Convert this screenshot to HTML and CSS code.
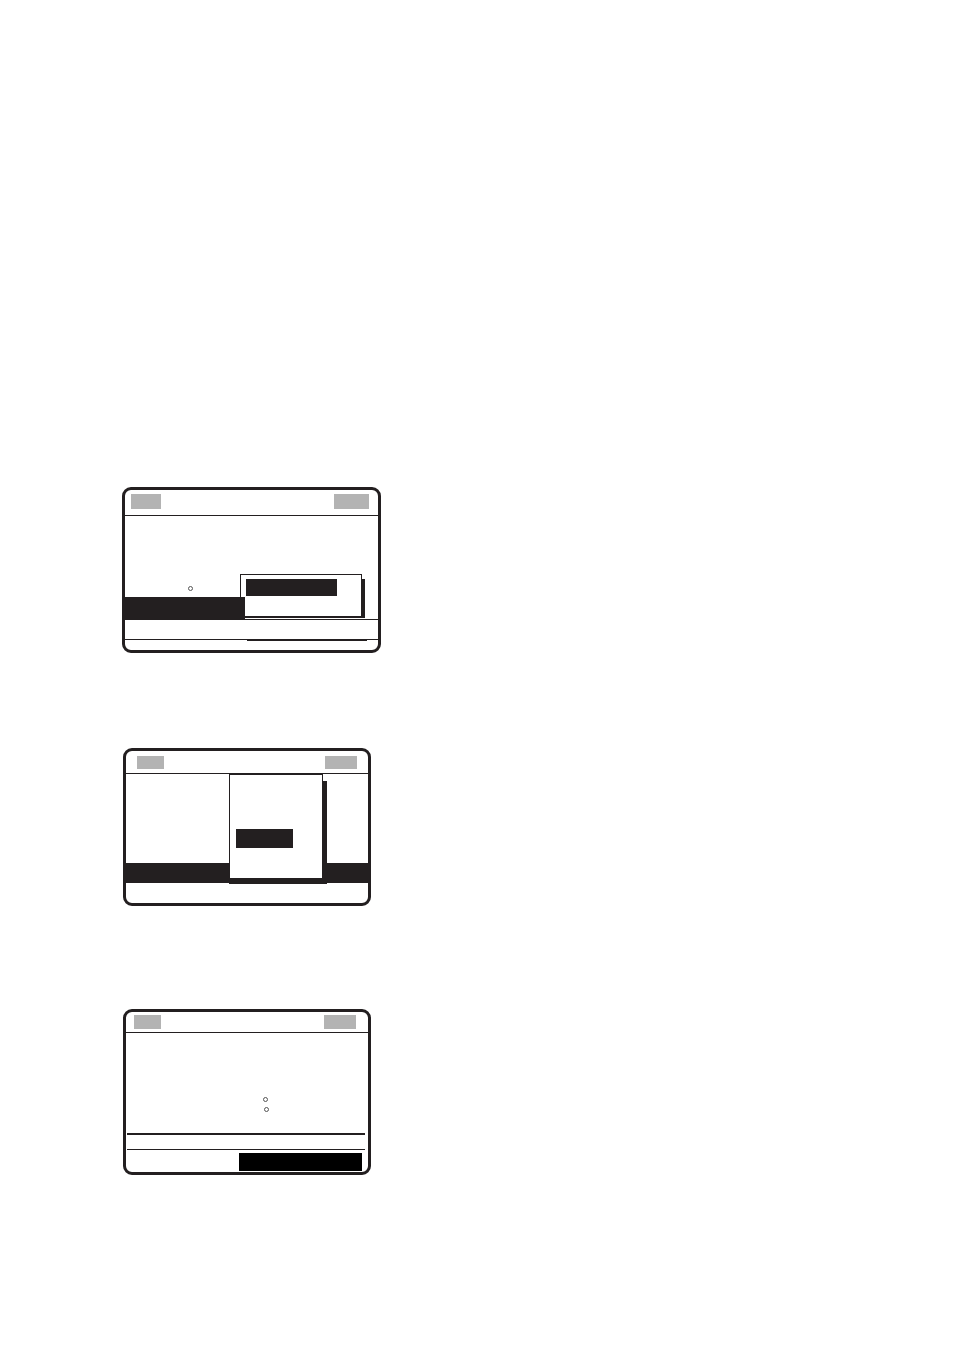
FILE: index.html
```html
<!DOCTYPE html>
<html>
<head>
<meta charset="utf-8">
<link rel="stylesheet" href="styles.css">
</head>
<body>
<div class="page">
  <div class="screen s1">
    <div class="hd hd1"><div class="chip c1l"></div><div class="chip c1r"></div></div>
    <div class="body1"><div class="ring r1"></div></div>
    <div class="row1"><div class="bar1"></div></div>
    <div class="foot1"><div class="seg1"></div></div>
    <div class="pop1"><div class="hl1"></div></div>
  </div>

  <div class="screen s2">
    <div class="hd hd2"><div class="chip c2l"></div><div class="chip c2r"></div></div>
    <div class="body2"></div>
    <div class="bar2"></div>
    <div class="pop2"><div class="hl2"></div></div>
  </div>

  <div class="screen s3">
    <div class="hd hd3"><div class="chip c3l"></div><div class="chip c3r"></div></div>
    <div class="body3"><div class="ring r3a"></div><div class="ring r3b"></div></div>
    <div class="thick3"></div>
    <div class="thin3"></div>
    <div class="box3"></div>
  </div>
</div>
</body>
</html>
```

FILE: styles.css
```css
html, body { margin: 0; padding: 0; background: #fff; }
body { font-family: "Liberation Sans", Arial, sans-serif; }
.page { padding: 487px 0 0 122px; }

.screen {
  position: relative;
  box-sizing: border-box;
  border: 3px solid #231f20;
  border-radius: 9px;
  background: #fff;
}
.hd {
  display: flex;
  justify-content: space-between;
  align-items: flex-start;
  border-bottom: 1px solid #231f20;
}
.chip { background: #b3b3b3; }
.ring {
  width: 5px; height: 5px;
  box-sizing: border-box;
  border: 1px solid #555;
  border-radius: 50%;
}

/* screen 1 */
.s1 { width: 259px; height: 166px; }
.hd1 { height: 21px; padding: 4px 9px 0 6px; }
.c1l { width: 30px; height: 15px; }
.c1r { width: 35px; height: 15px; }
.body1 { height: 81px; overflow: hidden; }
.r1 { margin: 70px 0 0 63px; }
.row1 { height: 22px; border-bottom: 1px solid #231f20; }
.bar1 { position: relative; z-index: 2; width: 120px; height: 22px; background: #231f20; }
.foot1 { margin-top: 19px; border-top: 1px solid #231f20; }
.seg1 { margin: -1px 0 0 122px; width: 120px; height: 2px; background: #231f20; }
.pop1 {
  position: absolute; z-index: 1;
  left: 115px; top: 84px;
  width: 122px; height: 44px;
  box-sizing: border-box;
  border: 1px solid #231f20;
  border-bottom-width: 2px;
  background: #fff;
}
.pop1::after {
  content: ""; position: absolute;
  right: -4px; top: 4px; bottom: -2px; width: 3px;
  background: #231f20;
}
.hl1 { margin: 4px 0 0 5px; width: 91px; height: 17px; background: #231f20; }

/* screen 2 */
.s2 { width: 248px; height: 158px; margin: 95px 0 0 1px; }
.hd2 { height: 17px; padding: 5px 11px 0 11px; }
.c2l { width: 27px; height: 13px; }
.c2r { width: 32px; height: 13px; }
.body2 { height: 89px; }
.bar2 { height: 20px; background: #231f20; }
.pop2 {
  position: absolute; z-index: 1;
  left: 103px; top: 22px;
  width: 94px; height: 106px;
  box-sizing: border-box;
  border: 1px solid #231f20;
  border-top-width: 2px;
  background: #fff;
}
.pop2::after {
  content: ""; position: absolute;
  right: -5px; top: 6px; bottom: -6px; width: 4px;
  background: #231f20;
}
.pop2::before {
  content: ""; position: absolute;
  left: -1px; bottom: -6px; width: 98px; height: 5px;
  background: #231f20;
}
.hl2 { margin: 54px 0 0 6px; width: 57px; height: 19px; background: #231f20; }

/* screen 3 */
.s3 { width: 248px; height: 166px; margin: 103px 0 0 1px; }
.hd3 { height: 17px; padding: 3px 12px 0 8px; }
.c3l { width: 27px; height: 14px; }
.c3r { width: 32px; height: 14px; }
.body3 { height: 100px; overflow: hidden; }
.r3a { margin: 64px 0 0 137px; }
.r3b { margin: 5px 0 0 138px; }
.thick3 { height: 2px; margin: 0 3px 0 1px; background: #231f20; }
.thin3 { height: 1px; margin: 14px 3px 0 1px; background: #231f20; }
.box3 { margin: 3px 0 0 113px; width: 123px; height: 18px; background: #000; }
```
